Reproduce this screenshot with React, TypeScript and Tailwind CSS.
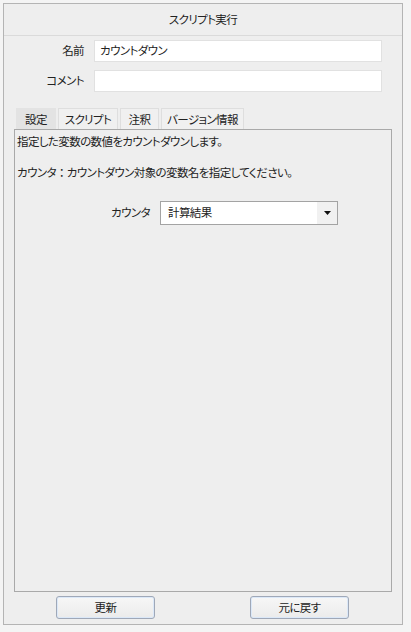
export default function App() {
  const font = { fontFamily: '"Noto Sans CJK JP", "Noto Sans", sans-serif', fontFeatureSettings: '"palt"' }
  const tabs = ["設定", "スクリプト", "注釈", "バージョン情報"]
  const tabWidths = ["w-[40px]", "w-[60px]", "w-[39px]", "w-[83px]"]

  return (
    <div className="w-[411px] h-[632px] bg-[#f4f4f4] pt-[3px] pl-[3px] text-[11.5px] tracking-[-0.6px] text-[#222]" style={font}>
      <div className="w-[400px] h-[622px] border border-[#b4b4b4] bg-[#eeeeee] flex flex-col">
        {/* title */}
        <div className="h-[32px] border-b border-[#dadada] flex items-center justify-center pt-[1px]">
          スクリプト実行
        </div>

        {/* form */}
        <div className="pt-[4px] flex flex-col gap-[8px]">
          <div className="flex items-center">
            <div className="w-[80px] text-right">名前</div>
            <div className="ml-[10px] w-[288px] h-[22px] bg-white border border-[#e1e1e1] flex items-center px-[5px]">カウントダウン</div>
          </div>
          <div className="flex items-center">
            <div className="w-[80px] text-right">コメント</div>
            <div className="ml-[10px] w-[288px] h-[22px] bg-white border border-[#e1e1e1]"></div>
          </div>
        </div>

        {/* tabs */}
        <div className="mt-[16px] ml-[12px] flex gap-[2px] h-[21px]">
          {tabs.map((t, i) => (
            <div
              key={t}
              className={
                (i === 0 ? "bg-[#e3e3e3] border-[#e3e3e3]" : "bg-[#f0f0f0] border-[#dedede]") +
                " " + tabWidths[i] +
                " border border-b-0 flex items-center justify-center pt-[1px]"
              }
            >
              {t}
            </div>
          ))}
        </div>

        {/* panel */}
        <div className="ml-[10px] w-[378px] h-[463px] border border-[#a9a9a9] bg-[#eeeeee] pl-[2px] pt-[4px]">
          <div className="leading-[15.5px]">指定した変数の数値をカウントダウンします。</div>
          <div className="leading-[15.5px]">&nbsp;</div>
          <div className="leading-[15.5px]">
            カウンタ<span style={{ fontFeatureSettings: "normal" }}>：</span>カウントダウン対象の変数名を指定してください。
          </div>
          <div className="mt-[20px] flex items-center">
            <div className="w-[133px] text-right">カウンタ</div>
            <div className="ml-[10px] w-[178px] h-[24px] bg-white border border-[#a3a3a3] flex items-center">
              <div className="flex-1 pl-[7px] pt-[1px]">計算結果</div>
              <div className="w-[20px] h-full bg-[#f1f1f1] flex items-center justify-center">
                <svg width="7" height="4" viewBox="0 0 7 4">
                  <path d="M0 0 H7 L3.5 4 Z" fill="#111" />
                </svg>
              </div>
            </div>
          </div>
        </div>

        {/* buttons */}
        <div className="mt-[4px] flex">
          <button className="ml-[52px] w-[99px] h-[23px] rounded-[3px] border border-[#9fa8b8] bg-gradient-to-b from-[#f7f7f7] to-[#ebebeb] shadow-[0_0_0_1px_#dbe8f8_inset]">
            更新
          </button>
          <button className="ml-[95px] w-[99px] h-[23px] rounded-[3px] border border-[#9fa8b8] bg-gradient-to-b from-[#f7f7f7] to-[#ebebeb] shadow-[0_0_0_1px_#dbe8f8_inset]">
            元に戻す
          </button>
        </div>
      </div>
    </div>
  )
}
